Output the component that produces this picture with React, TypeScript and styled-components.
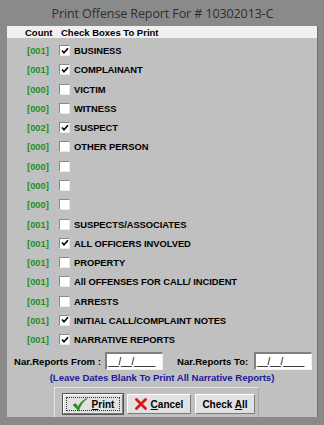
import React from 'react';
import styled, {createGlobalStyle} from 'styled-components';

const GlobalStyle = createGlobalStyle`
  body {
    margin: 0;
    background: #8a8a8a;
  }
`;

const Window = styled.div`
  width: 324px;
  height: 425px;
  box-sizing: border-box;
  background: #8a8a8a;
  padding: 0 6px 8px 7px;
  display: flex;
  flex-direction: column;
  font-family: 'Liberation Sans', Arial, sans-serif;
`;

const TitleBar = styled.div`
  height: 26px;
  display: flex;
  align-items: center;
  justify-content: center;
  font-family: 'Open Sans', 'Noto Sans', sans-serif;
  font-size: 12.5px;
  color: #2e2e2e;
  letter-spacing: -0.1px;
`;

const Panel = styled.div`
  flex: 1;
  background: #c0c0c0;
  border-right: 1px solid #6e6e6e;
  display: flex;
  flex-direction: column;
`;

const HeaderStrip = styled.div`
  height: 12px;
  background: #f0f0f0;
  display: flex;
  align-items: center;
  font-weight: bold;
  font-size: 9.5px;
  color: #000;
`;

const HeaderCount = styled.span`
  margin-left: 18px;
  width: 36px;
`;

const List = styled.div`
  padding-top: 3px;
  display: flex;
  flex-direction: column;
`;

const Row = styled.div`
  height: 19.27px;
  display: flex;
  align-items: center;
  padding-left: 20px;
  font-size: 9.4px;
  font-weight: bold;
`;

const Count = styled.span`
  width: 32px;
  color: #1f8f1f;
`;

const Box = styled.span`
  width: 9px;
  height: 9px;
  box-sizing: content-box;
  background: #fff;
  border-top: 1px solid #8a8a8a;
  border-left: 1px solid #8a8a8a;
  border-right: 1px solid #e8e8e8;
  border-bottom: 1px solid #e8e8e8;
  display: flex;
  align-items: center;
  justify-content: center;
`;

const Label = styled.span`
  margin-left: 4px;
  color: #000;
  letter-spacing: -0.05px;
`;

const NarRow = styled.div`
  display: flex;
  align-items: center;
  margin-top: 2px;
  height: 20px;
  font-size: 9.6px;
  font-weight: bold;
  color: #000;
`;

const NarLabel = styled.span<{$left: number}>`
  margin-left: ${p => p.$left}px;
  width: ${p => (p.$left > 10 ? 77 : 91)}px;
`;

const DateBox = styled.div`
  width: 54px;
  height: 15px;
  background: #fff;
  border-top: 2px solid #808080;
  border-left: 2px solid #808080;
  border-right: 1px solid #f0f0f0;
  border-bottom: 1px solid #f0f0f0;
  font-family: 'Liberation Sans', Arial, sans-serif;
  font-weight: normal;
  font-size: 10px;
  line-height: 15px;
  padding-left: 1px;
  letter-spacing: -0.3px;
`;

const Hint = styled.div`
  text-align: center;
  color: #1c1c9c;
  font-weight: bold;
  font-size: 9.6px;
  margin-top: 1px;
  height: 12px;
  letter-spacing: -0.05px;
`;

const ButtonPanel = styled.div`
  margin: 3px 0 0 47px;
  width: 205px;
  flex: 1;
  box-sizing: border-box;
  border-top: 1px solid #e6e6e6;
  border-left: 1px solid #e6e6e6;
  border-right: 1px solid #a8a8a8;
  display: flex;
  gap: 4px;
  padding: 6px 0 0 8px;
`;

const Button = styled.button<{$w: number; $focused?: boolean}>`
  width: ${p => p.$w}px;
  height: 20px;
  box-sizing: border-box;
  background: #e1e1e1;
  border-top: 1px solid #fff;
  border-left: 1px solid #fff;
  border-right: 1px solid #7a7a7a;
  border-bottom: 1px solid #7a7a7a;
  outline: ${p => (p.$focused ? '1px solid #555' : 'none')};
  padding: 0;
  display: flex;
  align-items: center;
  justify-content: center;
  gap: 4px;
  font-family: 'Liberation Sans', Arial, sans-serif;
  font-weight: bold;
  font-size: 10px;
  color: #000;
  position: relative;
`;

const FocusRing = styled.span`
  position: absolute;
  inset: 2px;
  border: 1px dotted #333;
`;

const U = styled.span`
  text-decoration: underline;
`;

const Check = () => (
  <svg width="8" height="8" viewBox="0 0 8 8">
    <path d="M1 3.5 L3 5.8 L7 1.2" stroke="#000" strokeWidth="1.6" fill="none" />
  </svg>
);

const GreenCheck = () => (
  <svg width="16" height="13" viewBox="0 0 16 13">
    <path d="M1 7 L3.5 5.5 L6 9 C8 5 11 2 15 0.5 C11 3.5 8.5 7 6.5 12.5 Z" fill="#1aa21a" stroke="#0b6e0b" strokeWidth="0.6" />
  </svg>
);

const RedX = () => (
  <svg width="12" height="12" viewBox="0 0 12 12">
    <path d="M1.5 1.5 L10.5 10.5 M10.5 1.5 L1.5 10.5" stroke="#d41a1a" strokeWidth="2.8" strokeLinecap="round" />
  </svg>
);

const items: [string, string, boolean][] = [
  ['001', 'BUSINESS', true],
  ['001', 'COMPLAINANT', true],
  ['000', 'VICTIM', false],
  ['000', 'WITNESS', false],
  ['002', 'SUSPECT', true],
  ['000', 'OTHER PERSON', false],
  ['000', '', false],
  ['000', '', false],
  ['000', '', false],
  ['001', 'SUSPECTS/ASSOCIATES', false],
  ['001', 'ALL OFFICERS INVOLVED', true],
  ['001', 'PROPERTY', false],
  ['001', 'All OFFENSES FOR CALL/ INCIDENT', false],
  ['001', 'ARRESTS', false],
  ['001', 'INITIAL CALL/COMPLAINT NOTES', true],
  ['001', 'NARRATIVE REPORTS', true],
];

const App = () => (
  <>
    <GlobalStyle />
    <Window>
      <TitleBar>Print Offense Report For # 10302013-C</TitleBar>
      <Panel>
        <HeaderStrip>
          <HeaderCount>Count</HeaderCount>
          <span>Check Boxes To Print</span>
        </HeaderStrip>
        <List>
          {items.map(([count, label, checked], i) => (
            <Row key={i}>
              <Count>[{count}]</Count>
              <Box>{checked && <Check />}</Box>
              <Label>{label}</Label>
            </Row>
          ))}
        </List>
        <NarRow>
          <NarLabel $left={7}>Nar.Reports From :</NarLabel>
          <DateBox>__/__/____</DateBox>
          <NarLabel $left={14}>Nar.Reports To:</NarLabel>
          <DateBox>__/__/____</DateBox>
        </NarRow>
        <Hint>(Leave Dates Blank To Print All Narrative Reports)</Hint>
        <ButtonPanel>
          <Button $w={60} $focused>
            <FocusRing />
            <GreenCheck />
            <span><U>P</U>rint</span>
          </Button>
          <Button $w={64}>
            <RedX />
            <span><U>C</U>ancel</span>
          </Button>
          <Button $w={60}>
            <span>Check <U>A</U>ll</span>
          </Button>
        </ButtonPanel>
      </Panel>
    </Window>
  </>
);

export default App;
